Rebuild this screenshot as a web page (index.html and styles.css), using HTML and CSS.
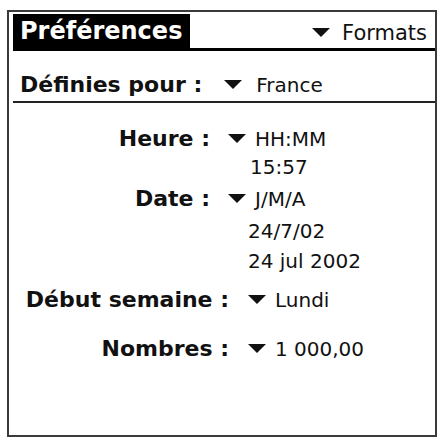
FILE: index.html
```html
<!DOCTYPE html>
<html lang="fr">
<head>
<meta charset="utf-8">
<title>Préférences</title>
<link rel="stylesheet" href="styles.css">
</head>
<body>
<div class="frame">
  <div class="titlebar">
    <div class="tab">Préférences</div>
    <div class="trigger title-trigger"><svg class="tri" viewBox="0 0 18 9"><polygon points="0,0 18,0 9,9"/></svg>Formats</div>
  </div>
  <div class="region">
    <span class="lbl">Définies pour :</span>
    <span class="trigger region-trigger"><svg class="tri" viewBox="0 0 18 9"><polygon points="0,0 18,0 9,9"/></svg>France</span>
  </div>
  <div class="form">
    <div class="row">
      <span class="lbl col-a">Heure :</span>
      <span class="trigger val"><svg class="tri" viewBox="0 0 18 9"><polygon points="0,0 18,0 9,9"/></svg>HH:MM</span>
    </div>
    <div class="sub sub-first">15:57</div>
    <div class="row row-date">
      <span class="lbl col-a">Date :</span>
      <span class="trigger val"><svg class="tri" viewBox="0 0 18 9"><polygon points="0,0 18,0 9,9"/></svg>J/M/A</span>
    </div>
    <div class="sub sub-gap">24/7/02</div>
    <div class="sub sub-gap">24 jul 2002</div>
    <div class="row row-week">
      <span class="lbl col-b">Début semaine :</span>
      <span class="trigger val"><svg class="tri" viewBox="0 0 18 9"><polygon points="0,0 18,0 9,9"/></svg>Lundi</span>
    </div>
    <div class="row row-num">
      <span class="lbl col-b">Nombres :</span>
      <span class="trigger val"><svg class="tri" viewBox="0 0 18 9"><polygon points="0,0 18,0 9,9"/></svg>1 000,00</span>
    </div>
  </div>
</div>
</body>
</html>
```
FILE: styles.css
```css
* { box-sizing: border-box; }
body {
  margin: 0;
  background: #fff;
  color: #111;
  font-family: "DejaVu Sans", "Verdana", sans-serif;
}
.frame {
  margin: 10px 0 0 7px;
  width: 430px;
  height: 427px;
  border: 2px solid #3a3a3a;
  padding: 2px 0 0 4px;
}
.titlebar {
  display: flex;
  height: 37px;
  border-bottom: 3px solid #000;
}
.tab {
  background: #000;
  color: #fff;
  font-weight: bold;
  font-size: 24px;
  line-height: 34px;
  padding: 0 8px 0 7px;
}
.trigger {
  display: flex;
  align-items: baseline;
}
.tri {
  width: 18px;
  height: 9px;
  margin-right: 9px;
  fill: #111;
  flex: none;
  align-self: baseline;
  position: relative;
  top: -3px;
}
.title-trigger {
  margin-left: auto;
  padding: 2px 8px 0 0;
  font-size: 21px;
  line-height: 34px;
  align-self: flex-start;
}
.title-trigger .tri { margin-right: 12px; }
.region {
  display: flex;
  align-items: baseline;
  padding: 19px 0 1px 7px;
  border-bottom: 2px solid #222;
  font-size: 22px;
  line-height: 30px;
}
.lbl {
  font-weight: bold;
}
.region .lbl { margin-right: 22px; }
.region-trigger { font-size: 20px; }
.region-trigger .tri { margin-right: 14px; }
.form {
  padding-top: 21px;
}
.row {
  display: flex;
  align-items: baseline;
  font-size: 22px;
  line-height: 30px;
}
.col-a {
  width: 197px;
  text-align: right;
  margin-right: 18px;
}
.col-b {
  width: 216px;
  text-align: right;
  margin-right: 19px;
}
.val {
  font-size: 20px;
}
.row-date { margin-top: 4px; }
.row-week { margin-top: 11px; }
.row-num { margin-top: 19px; }
.sub {
  font-size: 20px;
  line-height: 26px;
  padding-left: 235px;
}
.sub-first { padding-left: 237px; }
.sub-gap { margin-top: 4px; }
```
